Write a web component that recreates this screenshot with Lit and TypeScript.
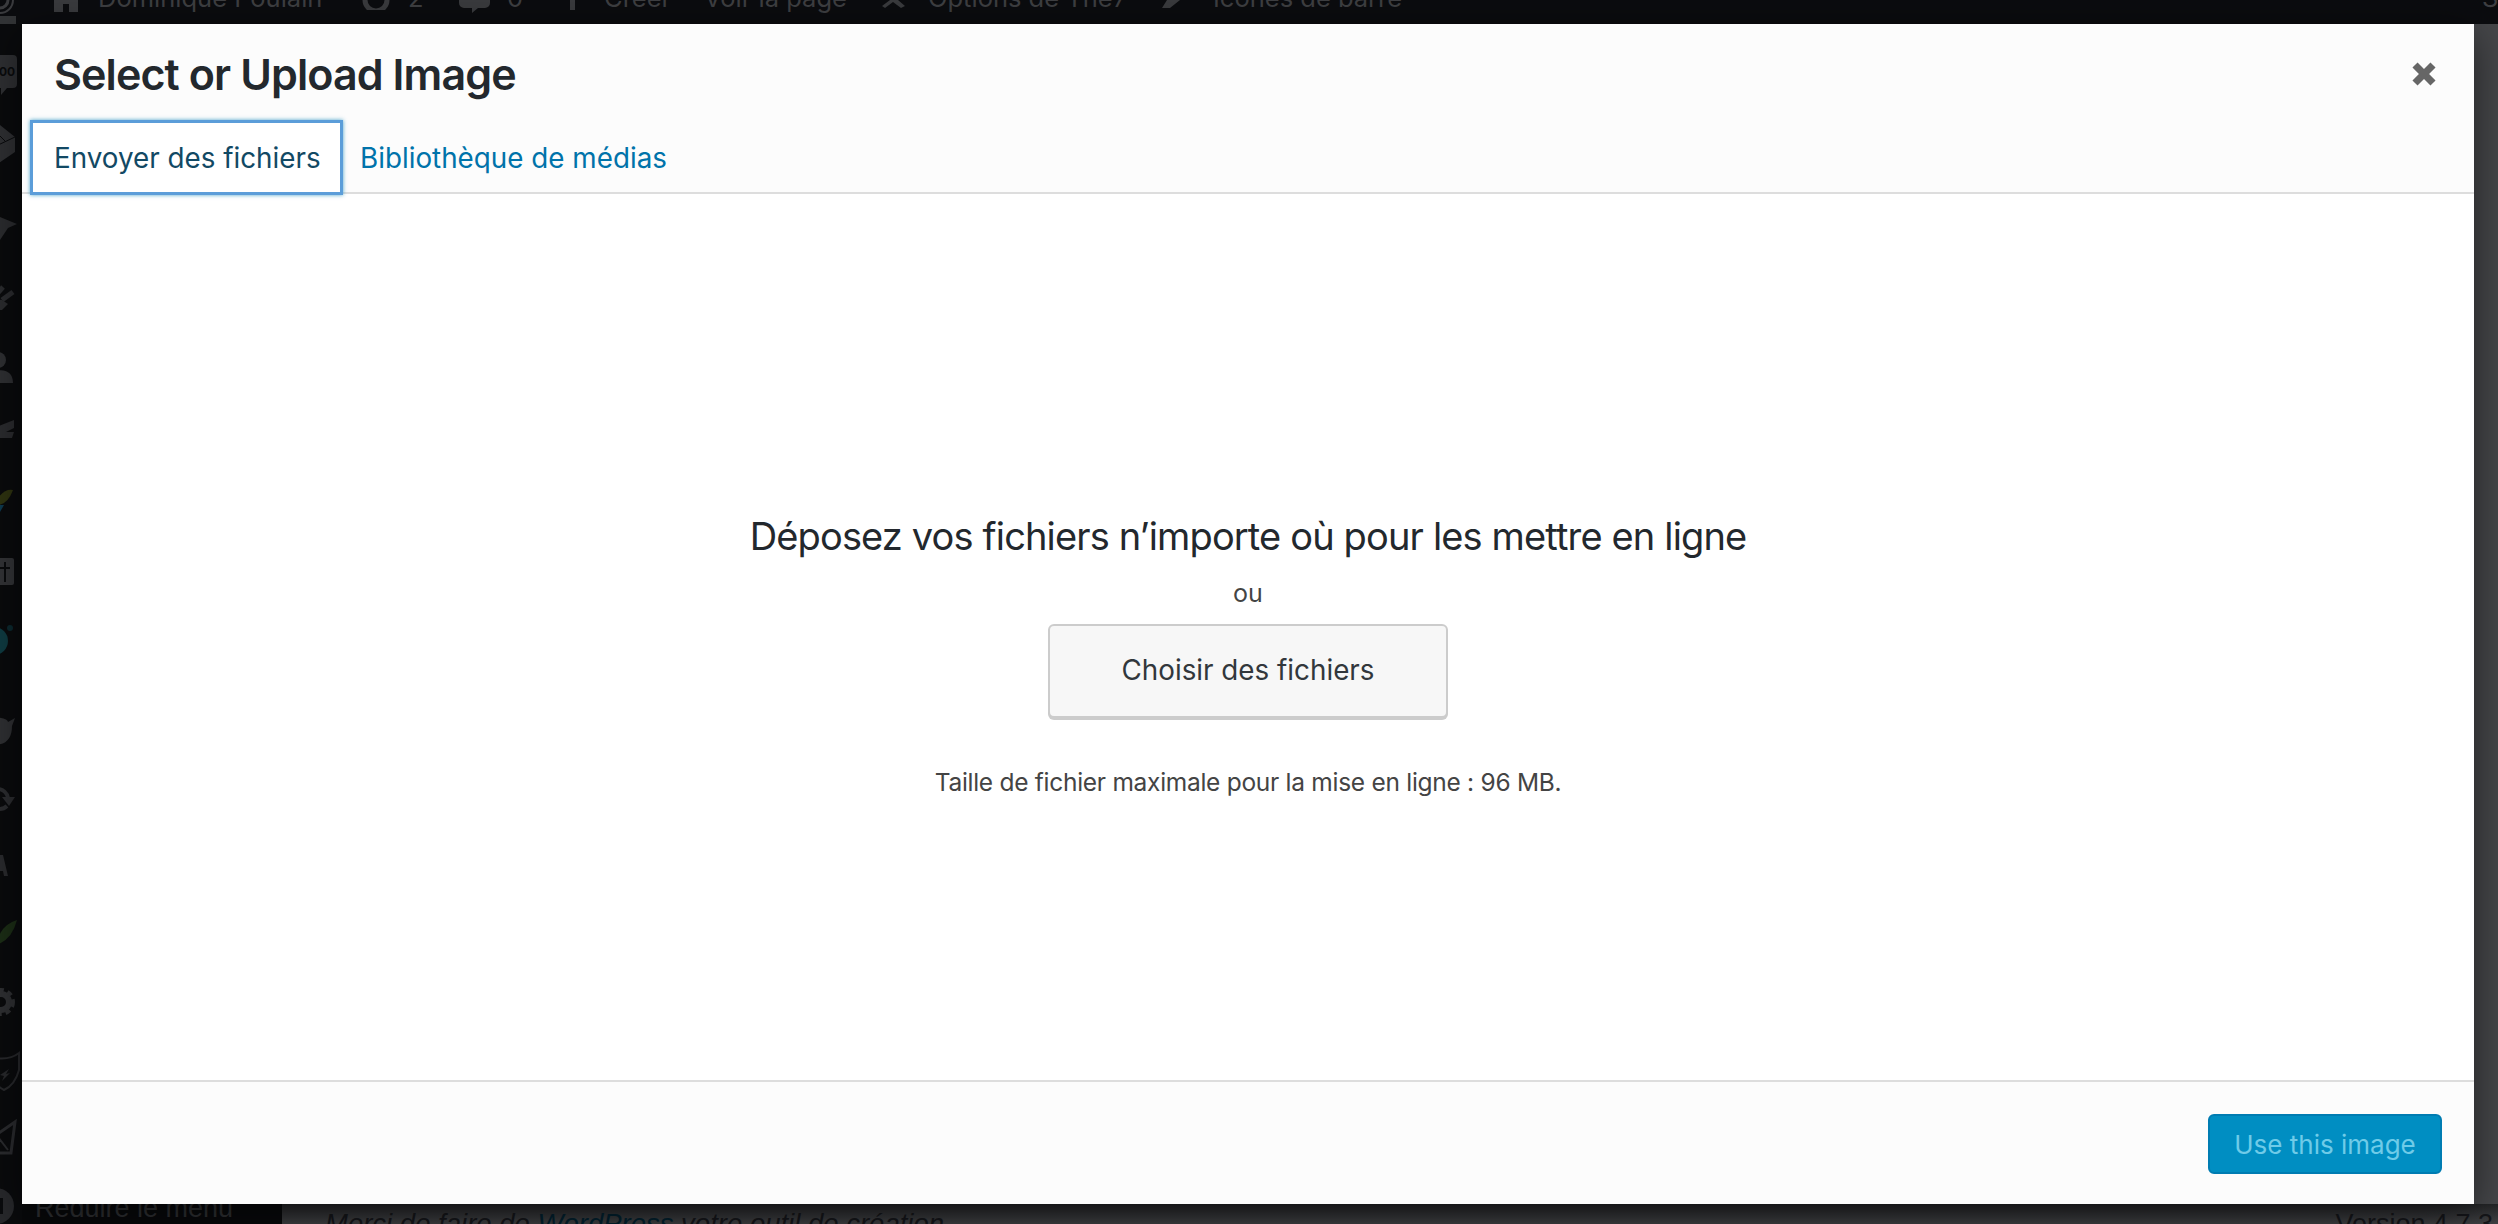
import { LitElement, html, css, svg } from "lit";
import { customElement } from "lit/decorators.js";

const sideIcons = svg`
  <path d="M-6 59a4 4 0 0 1 4-4h15a4 4 0 0 1 4 4v25a4 4 0 0 1-4 4H7l-6 7v-7h-7z" fill="#2f3033"/>
  <text x="-1" y="76" font-size="12" font-weight="700" font-family="Inter" fill="#0a0b0d">00</text>
  <path d="M-6 130l6-5 15 12v15L-4 165z" fill="#2f3033"/>
  <path d="M-4 146L15 137M-4 132L6 142" stroke="#0a0b0d" stroke-width="1" fill="none"/>
  <path d="M-4 220l4-3 17 7-9 4-8 12-4-2z" fill="#2b2c2f"/>
  <path d="M2 300l11-8" stroke="#2b2c2f" stroke-width="5" fill="none"/>
  <path d="M-5 296l8-9" stroke="#2b2c2f" stroke-width="5" fill="none"/>
  <path d="M-6 299l8 1 6 4-6 6h-8z" fill="#2b2c2f"/>
  <circle cx="-2" cy="360" r="8" fill="#2f3033"/>
  <path d="M-8 383v-11c10-4 21-2 21 11z" fill="#2f3033"/>
  <path d="M-6 428l20-8v8l-8 4h8l-2 6H-6z" fill="#2b2c2f"/>
  <path d="M-4 501q8-13 17-11-5 14-15 15z" fill="#2f3410"/>
  <path d="M-4 505h8l-4 7z" fill="#0f3b50"/>
  <rect x="-6" y="558" width="20" height="27" rx="2" fill="#333437"/>
  <path d="M4 562h2v20H4zM0 567h10v2H0z" fill="#0a0b0d"/>
  <circle cx="-6" cy="641" r="14" fill="#0f3b42"/>
  <circle cx="10" cy="628" r="3" fill="#0c2a30"/>
  <path d="M-6 717q14 1 14 5l7-4-3 8q0 19-18 19z" fill="#2f3033"/>
  <path d="M-2 789a11 11 0 0 1 10 9M7 806a11 11 0 0 1-9 3" stroke="#2c2d30" stroke-width="4" fill="none"/>
  <path d="M2 797h13l-6 9z" fill="#2c2d30"/>
  <path d="M-1 855h4l5 21H4l-1-5h-5l-1 5h-4z" fill="#2a2b2e"/>
  <path d="M-4 945q4-20 21-25-5 20-21 25z" fill="#1c2e16"/>
  <circle cx="1" cy="1002" r="8" stroke="#2f3033" stroke-width="6" fill="none"/>
  <circle cx="1" cy="1002" r="12" stroke="#2f3033" stroke-width="4" stroke-dasharray="5 4" fill="none"/>
  <path d="M-4 1058q14 2 23-5v17q-4 15-15 20-8-4-10-10" stroke="#28292c" stroke-width="2" fill="none"/>
  <path d="M0 1075l9-6-3 5 4-1-8 8 2-5z" fill="#28292c"/>
  <path d="M-4 1135l19-13-4 31H-4" stroke="#2b2c2f" stroke-width="3" fill="none"/>
  <path d="M-2 1137l10 13" stroke="#2b2c2f" stroke-width="2" fill="none"/>
  <circle cx="-4" cy="1206" r="18" fill="#28292c"/>
  <path d="M-1 1198h4v16h-4z" fill="#0a0b0d"/>
`;

@customElement("app-root")
export class AppRoot extends LitElement {
  static styles = css`
    :host {
      display: block;
      width: 2498px;
      height: 1224px;
      position: relative;
      overflow: hidden;
      background: #46474a;
      font-family: Inter, "Noto Sans", "Liberation Sans", sans-serif;
    }
    * { box-sizing: border-box; }
    .admin {
      display: grid;
      grid-template-rows: 24px 1fr 20px;
      grid-template-columns: 22px 1fr 24px;
      width: 100%;
      height: 100%;
    }
    .bar {
      grid-column: 1 / 4;
      background: #0b0c0f;
      overflow: hidden;
      height: 24px;
      color: #3e3f42;
      font-size: 25.5px;
      line-height: 32px;
      white-space: nowrap;
      display: grid;
      grid-template-columns: 54px 44px 264px 46px 51px 48px 58px 39px 100px 178px 46px 234px 51px 879px 390px 16px;
      align-items: start;
    }
    .bar span { display: block; margin-top: -18px; }
    .bar svg { display: block; }
    .bar .avatar { width: 16px; height: 14px; background: #333537; }
    .side {
      grid-row: 2 / 4;
      background: #0a0b0d;
      overflow: hidden;
    }
    .side svg { display: block; width: 22px; height: 1200px; }
    .right {
      grid-row: 2 / 3;
      display: flex;
      flex-direction: column;
      overflow: hidden;
      background: linear-gradient(90deg, #38393b, #4a4b4d 60%);
    }
    .right .top {
      height: 102px;
      flex: none;
      padding-top: 30px;
      background: linear-gradient(90deg, #3c3d3f, #4d4e50 60%);
    }
    .right .teal {
      width: 18px;
      height: 60px;
      background: #002f42;
      border-radius: 0 6px 6px 0;
    }
    .right .navy {
      height: 210px;
      flex: none;
      padding: 44px 0 0 4px;
      background: #0d1725;
    }
    .right .navy svg { display: block; width: 20px; height: 28px; }
    .right .gap { height: 92px; flex: none; }
    .right .row {
      height: 48px;
      flex: none;
      border-top: 2px solid #3f4042;
      border-bottom: 2px solid #3f4042;
      display: flex;
      align-items: center;
      padding-left: 21px;
    }
    .right .row svg { display: block; width: 3px; height: 16px; }
    .right .gap2 { height: 172px; flex: none; }
    .right .gap3 { height: 406px; flex: none; border-bottom: 1px solid #3f4042; }
    .foot {
      grid-column: 2 / 4;
      grid-row: 3;
      display: flex;
      align-items: flex-start;
      overflow: hidden;
      height: 20px;
      background: linear-gradient(180deg, #242527, #404144);
      color: #15161a;
      font-family: "Liberation Sans", sans-serif;
      font-size: 27.5px;
      line-height: 32px;
      white-space: nowrap;
    }
    .menu {
      width: 260px;
      flex: none;
      height: 20px;
      background: #08090b;
      color: #2f3033;
      padding-left: 13px;
      font-size: 27px;
      line-height: 8px;
    }
    .thanks {
      margin-left: 43px;
      margin-top: 4px;
      font-style: italic;
    }
    .thanks b { color: #02202e; font-weight: 400; }
    .ver {
      margin-left: auto;
      margin-right: 5px;
      margin-top: 4px;
      font-size: 27px;
    }
    .modal {
      position: absolute;
      left: 22px;
      top: 24px;
      width: 2452px;
      height: 1180px;
      background: #fff;
      box-shadow: 0 10px 40px rgba(0, 0, 0, 0.55);
      display: flex;
      flex-direction: column;
    }
    .head {
      height: 170px;
      flex: none;
      background: #fcfcfc;
      border-bottom: 2px solid #ddd;
      position: relative;
    }
    h1 {
      margin: 0;
      height: 96px;
      padding: 23px 0 0 32px;
      font-size: 43px;
      line-height: 54px;
      font-weight: 600;
      letter-spacing: -0.9px;
      color: #23282d;
    }
    .close {
      position: absolute;
      right: 38px;
      top: 38px;
      width: 24px;
      height: 24px;
      display: block;
    }
    .tabs {
      display: flex;
      align-items: stretch;
      height: 75px;
      margin-left: 8px;
      font-size: 27.8px;
      position: relative;
    }
    .tab {
      width: 313px;
      height: 75px;
      padding-left: 21px;
      display: flex;
      align-items: center;
      color: #124964;
      background: #fff;
      border: 3px solid #5b9dd9;
      box-shadow: 0 0 4px rgba(30, 140, 190, 0.8);
    }
    .lib {
      display: flex;
      align-items: center;
      padding-left: 17px;
      color: #0073aa;
      height: 75px;
    }
    .body {
      flex: 1;
      display: flex;
      flex-direction: column;
      align-items: center;
      background: #fff;
      color: #23282d;
    }
    .drop {
      margin-top: 314px;
      font-size: 38px;
      line-height: 56px;
      height: 56px;
      letter-spacing: -0.85px;
    }
    .or {
      margin-top: 7px;
      font-size: 25px;
      line-height: 44px;
      color: #444;
    }
    .pick {
      margin-top: 9px;
      width: 400px;
      height: 94px;
      background: #f7f7f7;
      border: 2px solid #ccc;
      border-radius: 6px;
      box-shadow: 0 2px 0 #ccc;
      font: inherit;
      font-size: 27.8px;
      color: #32373c;
      padding: 0 0 2px;
    }
    .limit {
      margin-top: 46px;
      font-size: 24.5px;
      line-height: 36px;
      letter-spacing: -0.28px;
      color: #444;
    }
    .footer {
      height: 124px;
      flex: none;
      background: #fcfcfc;
      border-top: 2px solid #ddd;
      display: flex;
      justify-content: flex-end;
      padding: 32px 32px 0 0;
    }
    .use {
      width: 234px;
      height: 60px;
      background: #008ec2;
      border: 2px solid #007cb2;
      border-radius: 6px;
      font: inherit;
      font-size: 26px;
      color: #6fcbe8;
      padding: 0;
    }
  `;

  render() {
    const ic = "#3a3b3e";
    return html`
      <div class="admin">
        <div class="bar">
          <svg width="20" height="16" viewBox="0 0 20 16"><circle cx="0" cy="0" r="13" fill="none" stroke="${ic}" stroke-width="2"/><circle cx="0" cy="0" r="8" fill="none" stroke="${ic}" stroke-width="3"/></svg>
          <svg width="24" height="12" viewBox="0 0 24 12"><path d="M0 0h24v12H0z M9 4v8h6V4z" fill-rule="evenodd" fill="${ic}"/></svg>
          <span>Dominique Poulain</span>
          <svg width="28" height="10" viewBox="0 0 28 10"><path d="M3 0a11 11 0 0 0 22 0" fill="none" stroke="${ic}" stroke-width="5"/></svg>
          <span>2</span>
          <svg width="31" height="13" viewBox="0 0 31 13"><path d="M0 0h31v3a5 5 0 0 1-5 5h-7l-6 5v-5H5a5 5 0 0 1-5-5z" fill="${ic}"/></svg>
          <span>0</span>
          <svg width="15" height="10" viewBox="0 0 15 10"><path d="M5 0h5v10H5z" fill="${ic}"/></svg>
          <span>Créer</span>
          <span>Voir la page</span>
          <svg width="26" height="8" viewBox="0 0 26 8"><path d="M8 0L0 6l3 2 8-6 8 6 4-2-7-6z" fill="${ic}"/></svg>
          <span>Options de The7</span>
          <svg width="18" height="8" viewBox="0 0 18 8"><path d="M5 0h13L8 8H0z" fill="${ic}"/></svg>
          <span>Icônes de barre</span>
          <i></i>
          <span>Salutations, Dominique Poulain</span>
          <div class="avatar"></div>
        </div>
        <div class="side">
          <svg viewBox="0 24 22 1200">${sideIcons}</svg>
        </div>
        <div class="mid"></div>
        <div class="right">
          <div class="top"><div class="teal"></div></div>
          <div class="navy">
            <svg viewBox="0 0 20 28"><path d="M1 1l26 27M20 1L1 27" stroke="#3c4048" stroke-width="3" fill="none"/></svg>
          </div>
          <div class="gap"></div>
          <div class="row"><svg viewBox="0 0 3 16"><path d="M3 0L0 6h3zM3 16L0 10h3z" fill="#1f2022"/></svg></div>
          <div class="gap2"></div>
          <div class="row"><svg viewBox="0 0 3 16"><path d="M3 0L0 6h3zM3 16L0 10h3z" fill="#1f2022"/></svg></div>
          <div class="gap3"></div>
        </div>
        <div class="foot">
          <div class="menu">Réduire le menu</div>
          <div class="thanks">Merci de faire de <b>WordPress</b> votre outil de création.</div>
          <div class="ver">Version 4.7.3</div>
        </div>
      </div>

      <section class="modal">
        <header class="head">
          <h1>Select or Upload Image</h1>
          <svg class="close" viewBox="0 0 26 26">
            <path d="M6 0.5L13 7.500 20 0.500 25.500 6 18.500 13 25.500 20 20 25.500 13 18.500 6 25.500 0.500 20 7.500 13 0.500 6z" fill="#666"/>
          </svg>
          <nav class="tabs">
            <div class="tab">Envoyer des fichiers</div>
            <div class="lib">Bibliothèque de médias</div>
          </nav>
        </header>
        <main class="body">
          <div class="drop">Déposez vos fichiers n’importe où pour les mettre en ligne</div>
          <div class="or">ou</div>
          <button class="pick">Choisir des fichiers</button>
          <div class="limit">Taille de fichier maximale pour la mise en ligne : 96 MB.</div>
        </main>
        <footer class="footer">
          <button class="use">Use this image</button>
        </footer>
      </section>
    `;
  }
}
